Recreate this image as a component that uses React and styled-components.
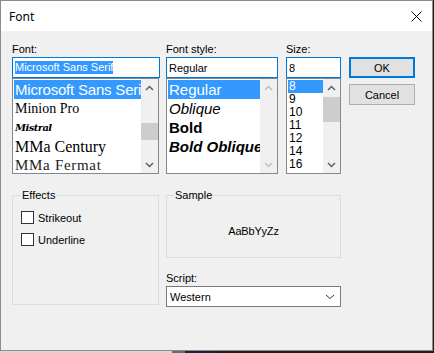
import styled, { createGlobalStyle } from 'styled-components';

const GlobalStyle = createGlobalStyle`
  html, body {
    margin: 0;
    padding: 0;
  }
  body {
    width: 434px;
    height: 353px;
    overflow: hidden;
    background: linear-gradient(to right, #d6d6d6 0 172px, #6b6b6b 172px 185px, #17263a 185px 217px, #1e1e1e 217px);
    font-family: "Liberation Sans", Arial, sans-serif;
  }
`;

const Window = styled.div`
  width: 433px;
  height: 351px;
  box-sizing: border-box;
  border: 1px solid #8c8c8c;
  background: #f0f0f0;
  display: flex;
  flex-direction: column;
`;

const TitleBar = styled.div`
  height: 30px;
  flex-shrink: 0;
  background: #fff;
  display: flex;
  align-items: center;
  justify-content: space-between;
  padding: 0 10px 0 8px;
`;

const Title = styled.span`
  font: 12px "Noto Sans", "Segoe UI", sans-serif;
  color: #000;
`;

const Content = styled.div`
  padding: 11px 0 0 11px;
  font: 11px "Liberation Sans", Arial, sans-serif;
  color: #000;
`;

const TopRow = styled.div`
  display: flex;
  align-items: flex-start;
`;

const Field = styled.div`
  width: ${p => p.$w}px;
  margin-right: ${p => p.$mr || 0}px;
  display: flex;
  flex-direction: column;
`;

const Label = styled.div`
  height: 15px;
  line-height: 15px;
`;

const TextBox = styled.div`
  height: 21px;
  box-sizing: border-box;
  border: 1px solid #0078d7;
  background: #fff;
  padding: 0 2px;
  display: flex;
  align-items: center;
  white-space: nowrap;
`;

const Selected = styled.span`
  background: #3399ff;
  color: #fff;
  line-height: 13px;
`;

const ListBox = styled.div`
  width: ${p => p.$w}px;
  height: 96px;
  box-sizing: border-box;
  border: 1px solid #828790;
  background: #fff;
  display: flex;
`;

const Items = styled.div`
  flex: 1;
  min-width: 0;
  padding: 1px 0 0 1px;
  overflow: hidden;
`;

const Row = styled.div`
  height: ${p => p.$h}px;
  line-height: ${p => p.$h}px;
  padding-left: 1px;
  white-space: nowrap;
  overflow: hidden;
  background: ${p => (p.$sel ? '#3399ff' : 'transparent')};
  color: ${p => (p.$sel ? '#fff' : p.$color || '#000')};
  font-family: ${p => p.$family || '"Liberation Sans", Arial, sans-serif'};
  font-size: ${p => p.$size || 11}px;
  font-style: ${p => (p.$italic ? 'italic' : 'normal')};
  font-weight: ${p => (p.$bold ? 'bold' : 'normal')};
  letter-spacing: ${p => p.$ls || 0}px;
`;

const ScrollBar = styled.div`
  width: 17px;
  flex-shrink: 0;
  background: #f0f0f0;
  display: flex;
  flex-direction: column;
`;

const ArrowBtn = styled.div`
  height: 17px;
  display: flex;
  align-items: center;
  justify-content: center;
`;

const Track = styled.div`
  flex: 1;
`;

const Thumb = styled.div`
  margin-top: ${p => p.$top}px;
  height: ${p => p.$h}px;
  background: #cdcdcd;
`;

const Buttons = styled.div`
  width: 66px;
  padding-top: 15px;
  display: flex;
  flex-direction: column;
  gap: 6px;
`;

const Button = styled.div`
  height: 21px;
  box-sizing: border-box;
  background: #e1e1e1;
  border: ${p => (p.$default ? '2px solid #0078d7' : '1px solid #adadad')};
  display: flex;
  align-items: center;
  justify-content: center;
`;

const BottomRow = styled.div`
  display: flex;
  align-items: flex-start;
  margin-top: 15px;
`;

const Group = styled.fieldset`
  margin: 0 ${p => p.$mr || 0}px 0 0;
  padding: 0 0 0 8px;
  width: ${p => p.$w}px;
  height: ${p => p.$h}px;
  box-sizing: border-box;
  border: 1px solid #dcdcdc;
  min-width: 0;
`;

const Legend = styled.legend`
  margin-left: ${p => p.$ml}px;
  padding: 0 1px;
  line-height: 13px;
  font-size: 11px;
`;

const CheckRow = styled.div`
  display: flex;
  align-items: center;
  gap: 4px;
  height: 13px;
  margin-top: ${p => p.$mt}px;
`;

const CheckBox = styled.span`
  width: 13px;
  height: 13px;
  box-sizing: border-box;
  border: 1px solid #333;
  background: #fff;
`;

const RightCol = styled.div`
  width: 175px;
  display: flex;
  flex-direction: column;
`;

const SampleText = styled.div`
  height: 54px;
  padding-left: 0;
  margin-left: -8px;
  display: flex;
  align-items: center;
  justify-content: center;
  padding-top: 3px;
  box-sizing: border-box;
  letter-spacing: -0.2px;
`;

const ScriptLabel = styled(Label)`
  margin-top: 13px;
`;

const Select = styled.div`
  height: 21px;
  box-sizing: border-box;
  border: 1px solid #7a7a7a;
  background: #fff;
  display: flex;
  align-items: center;
  justify-content: space-between;
  padding: 0 5px 0 3px;
`;

const Chevron = ({ dir = 'up', color = '#606060', w = 9, h = 6, sw = 1.5 }) => (
  <svg width={w} height={h} viewBox={`0 0 ${w} ${h}`}>
    <polyline
      points={dir === 'up' ? `1,${h - 1} ${w / 2},1.5 ${w - 1},${h - 1}` : `1,1 ${w / 2},${h - 1.5} ${w - 1},1`}
      fill="none"
      stroke={color}
      strokeWidth={sw}
    />
  </svg>
);

const Scroll = ({ thumb, disabled }) => {
  const c = disabled ? '#bfbfbf' : '#606060';
  return (
    <ScrollBar>
      <ArrowBtn><Chevron dir="up" color={c} /></ArrowBtn>
      <Track>{thumb && <Thumb $top={thumb[0]} $h={thumb[1]} />}</Track>
      <ArrowBtn><Chevron dir="down" color={c} /></ArrowBtn>
    </ScrollBar>
  );
};

const serif = '"Liberation Serif", "Times New Roman", serif';

const fonts = [
  { name: 'Microsoft Sans Serif', size: 15, sel: true, ls: -0.2 },
  { name: 'Minion Pro', size: 14, family: serif },
  { name: 'Mistral', size: 10, family: '"DejaVu Serif", serif', italic: true, bold: true, ls: -0.6 },
  { name: 'MMa Century', size: 16, family: serif },
  { name: 'MMa Fermat', size: 15, family: serif, ls: 0.7, color: '#222' },
];

const styles = [
  { name: 'Regular', sel: true },
  { name: 'Oblique', italic: true },
  { name: 'Bold', bold: true },
  { name: 'Bold Oblique', bold: true, italic: true },
];

const sizes = ['8', '9', '10', '11', '12', '14', '16'];

function App() {
  return (
    <>
      <GlobalStyle />
      <Window>
        <TitleBar>
          <Title>Font</Title>
          <svg width="11" height="11" viewBox="0 0 11 11">
            <path d="M0.5 0.5 L10.5 10.5 M10.5 0.5 L0.5 10.5" stroke="#000" strokeWidth="1" />
          </svg>
        </TitleBar>
        <Content>
          <TopRow>
            <Field $w={148} $mr={6}>
              <Label>Font:</Label>
              <TextBox><Selected>Microsoft Sans Serif</Selected></TextBox>
              <ListBox $w={147}>
                <Items>
                  {fonts.map(f => (
                    <Row key={f.name} $h={19} $sel={f.sel} $size={f.size} $family={f.family}
                      $italic={f.italic} $bold={f.bold} $ls={f.ls} $color={f.color}>
                      {f.name}
                    </Row>
                  ))}
                </Items>
                <Scroll thumb={[27, 17]} />
              </ListBox>
            </Field>
            <Field $w={112} $mr={8}>
              <Label>Font style:</Label>
              <TextBox>Regular</TextBox>
              <ListBox $w={112}>
                <Items>
                  {styles.map(s => (
                    <Row key={s.name} $h={19} $sel={s.sel} $size={15} $italic={s.italic} $bold={s.bold}>
                      {s.name}
                    </Row>
                  ))}
                </Items>
                <Scroll disabled />
              </ListBox>
            </Field>
            <Field $w={55} $mr={8}>
              <Label>Size:</Label>
              <TextBox>8</TextBox>
              <ListBox $w={55}>
                <Items>
                  {sizes.map((s, i) => (
                    <Row key={s} $h={13} $sel={i === 0} $size={12}>{s}</Row>
                  ))}
                </Items>
                <Scroll thumb={[1, 25]} />
              </ListBox>
            </Field>
            <Buttons>
              <Button $default>OK</Button>
              <Button>Cancel</Button>
            </Buttons>
          </TopRow>
          <BottomRow>
            <Group $w={147} $h={116} $mr={7}>
              <Legend $ml={0}>Effects</Legend>
              <CheckRow $mt={9}><CheckBox />Strikeout</CheckRow>
              <CheckRow $mt={9}><CheckBox />Underline</CheckRow>
            </Group>
            <RightCol>
              <Group $w={175} $h={69}>
                <Legend $ml={-1}>Sample</Legend>
                <SampleText>AaBbYyZz</SampleText>
              </Group>
              <ScriptLabel>Script:</ScriptLabel>
              <Select>
                Western
                <Chevron dir="down" color="#333" w={10} h={6} sw={1} />
              </Select>
            </RightCol>
          </BottomRow>
        </Content>
      </Window>
    </>
  );
}

export default App;
